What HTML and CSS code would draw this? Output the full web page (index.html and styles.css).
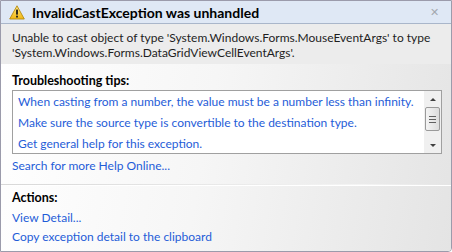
FILE: index.html
```html
<!DOCTYPE html>
<html lang="en">
<head>
    <meta charset="UTF-8">
    <title>InvalidCastException was unhandled</title>
    <link rel="stylesheet" href="styles.css">
</head>
<body>
    <div class="dialog">
        <div class="title-bar">
            <svg class="warn-icon" width="16" height="15" viewBox="0 0 16 15">
                <defs>
                    <linearGradient id="tri" x1="0" y1="0" x2="0" y2="1">
                        <stop offset="0" stop-color="#ffe680"/>
                        <stop offset="1" stop-color="#f2b712"/>
                    </linearGradient>
                </defs>
                <path d="M8 0.8 L15.3 14 L0.7 14 Z" fill="url(#tri)" stroke="#b48a10" stroke-width="0.9" stroke-linejoin="round"/>
                <rect x="7.1" y="4.6" width="1.8" height="5" fill="#1a1a1a"/>
                <rect x="7.1" y="10.7" width="1.8" height="1.8" fill="#1a1a1a"/>
            </svg>
            <span class="title">InvalidCastException was unhandled</span>
            <span class="close">&#x2715;</span>
        </div>

        <div class="message">
            Unable to cast object of type 'System.Windows.Forms.MouseEventArgs' to type
            'System.Windows.Forms.DataGridViewCellEventArgs'.
        </div>

        <div class="body">
            <div class="section-head">Troubleshooting tips:</div>
            <div class="tips-box">
                <ul class="tips">
                    <li><a href="#">When casting from a number, the value must be a number less than infinity.</a></li>
                    <li><a href="#">Make sure the source type is convertible to the destination type.</a></li>
                    <li><a href="#">Get general help for this exception.</a></li>
                </ul>
                <div class="scrollbar">
                    <span class="arrow up"></span>
                    <span class="thumb"><i></i><i></i><i></i></span>
                    <span class="arrow down"></span>
                </div>
            </div>
            <a href="#" class="link search">Search for more Help Online...</a>

            <div class="separator"></div>

            <div class="section-head actions">Actions:</div>
            <a href="#" class="link">View Detail...</a>
            <a href="#" class="link">Copy exception detail to the clipboard</a>
        </div>
    </div>
</body>
</html>
```

FILE: styles.css
```css
* {
    margin: 0;
    padding: 0;
    box-sizing: border-box;
}

body {
    width: 452px;
    height: 252px;
    font-family: 'Lato', 'Noto Sans', sans-serif;
    font-size: 12px;
    color: #000000;
    background: #ffffff;
}

.dialog {
    width: 452px;
    height: 252px;
    border: 1px solid #9b9bab;
    border-bottom-right-radius: 4px;
    display: flex;
    flex-direction: column;
    overflow: hidden;
}

.title-bar {
    height: 23px;
    flex: none;
    display: flex;
    align-items: center;
    padding: 0 8px 0 8px;
    background: #dfe8f5;
    border-bottom: 1px solid #a9b6ca;
}

.warn-icon {
    flex: none;
    margin-right: 7px;
}

.title {
    font-weight: bold;
    font-size: 14px;
    color: #000000;
}

.close {
    margin-left: auto;
    color: #a4a9b0;
    font-size: 11px;
    margin-right: 4px;
}

.message {
    flex: none;
    height: 40px;
    padding: 6px 10px 0 11px;
    line-height: 15px;
    background: #ececec;
    color: #1e1e1e;
}

.body {
    flex: 1;
    display: flex;
    flex-direction: column;
    align-items: flex-start;
    padding: 9px 9px 0 11px;
    background: linear-gradient(100deg, #ffffff 0%, #f6f6f6 45%, #e4e4e4 100%);
}

.section-head {
    font-weight: bold;
    font-size: 12.5px;
    line-height: 16px;
    margin-bottom: 1px;
}

.section-head.actions {
    margin-bottom: 2px;
}

.tips-box {
    align-self: stretch;
    height: 64px;
    flex: none;
    display: flex;
    border: 1px solid #a0a0a0;
    background: #ffffff;
}

.tips {
    flex: 1;
    min-width: 0;
    overflow: hidden;
    list-style: none;
    padding: 0 0 0 5px;
}

.tips li {
    line-height: 21px;
    white-space: nowrap;
}

.tips a,
.link {
    color: #1f5dd8;
    text-decoration: none;
}

.link {
    line-height: 19px;
}

.search {
    margin-top: 2px;
}

.scrollbar {
    width: 17px;
    flex: none;
    display: flex;
    flex-direction: column;
    align-items: center;
    background: #f0f0f0;
}

.arrow {
    width: 0;
    height: 0;
    border-left: 3px solid transparent;
    border-right: 3px solid transparent;
}

.arrow.up {
    border-bottom: 3px solid #404040;
    margin: 7px 0 6px;
}

.arrow.down {
    border-top: 3px solid #404040;
    margin: auto 0 6px;
}

.thumb {
    width: 15px;
    height: 24px;
    border: 1px solid #9a9a9a;
    border-radius: 2px;
    background: linear-gradient(90deg, #f4f4f4, #dcdcdc);
    display: flex;
    flex-direction: column;
    align-items: center;
    justify-content: center;
    gap: 2px;
}

.thumb i {
    width: 7px;
    height: 1px;
    background: #606060;
}

.separator {
    align-self: stretch;
    height: 2px;
    margin: 9px -9px 4px -11px;
    background: linear-gradient(90deg, #d8d8d8, #f4f4f4 80%, #e4e4e4);
    border-bottom: 1px solid #ffffff;
}
```
